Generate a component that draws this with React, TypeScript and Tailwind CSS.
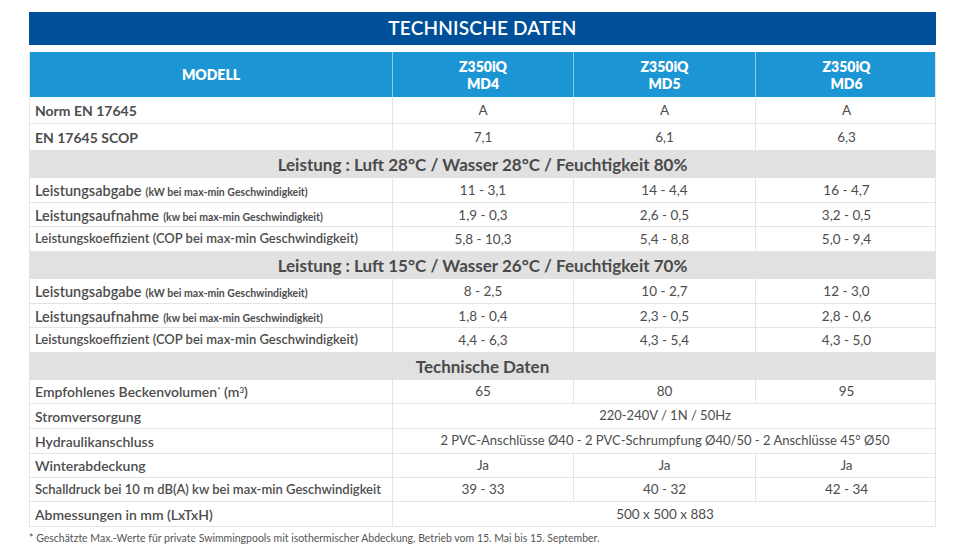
import React from "react";

const font = { fontFamily: "Lato, 'Open Sans', sans-serif" };

const cols = "grid grid-cols-[363px_181px_182px_181px]";

type Row = {
  label: React.ReactNode;
  values: string[];
  h: string;
};

function DataRow({ label, values, h }: Row) {
  return (
    <div className={`${cols} ${h} border-b border-[#e4e4e4] text-[#4d4d4d]`}>
      <div className="flex items-center pl-[5px] border-r border-[#e4e4e4] whitespace-nowrap">{label}</div>
      {values.length === 1 ? (
        <div className="col-span-3 flex items-center justify-center text-[13px]">{values[0]}</div>
      ) : (
        values.map((v, i) => (
          <div
            key={i}
            className={`flex items-center justify-center text-[13.5px] ${i < 2 ? "border-r border-[#e4e4e4]" : ""}`}
          >
            {v}
          </div>
        ))
      )}
    </div>
  );
}

function Section({ title }: { title: string }) {
  return (
    <div className="h-[27px] bg-[#e1e1e1] flex items-center justify-center text-[17px] font-bold text-[#4a4a4a]">
      {title}
    </div>
  );
}

const Abgabe = (
  <span>
    <span className="text-[14.5px] font-semibold">Leistungsabgabe</span>{" "}
    <span className="text-[10.5px] font-bold">(kW bei max-min Geschwindigkeit)</span>
  </span>
);
const Aufnahme = (
  <span>
    <span className="text-[14.5px] font-semibold">Leistungsaufnahme</span>{" "}
    <span className="text-[10.5px] font-bold">(kw bei max-min Geschwindigkeit)</span>
  </span>
);
const Koeff = <span className="text-[13px] font-semibold">Leistungskoeffizient (COP bei max-min Geschwindigkeit)</span>;

export default function App() {
  return (
    <div className="w-[961px] h-[554px] bg-white pt-[12px] pl-[29px]" style={font}>
      <div className="w-[907px]">
        <div className="h-[33px] bg-[#004f99] flex items-center justify-center text-white text-[19px] font-semibold tracking-[0.2px]">
          TECHNISCHE DATEN
        </div>
        <div className="mt-[7px] border-x border-b border-[#e4e4e4]">
          <div className={`${cols} h-[45px] bg-[#1b95d4] text-white font-extrabold text-[14px] leading-[17px]`}>
            <div className="flex items-center justify-center border-r border-[#8cc8ea]">MODELL</div>
            <div className="flex flex-col items-center justify-center border-r border-[#8cc8ea]">
              <span>Z350iQ</span>
              <span>MD4</span>
            </div>
            <div className="flex flex-col items-center justify-center border-r border-[#8cc8ea]">
              <span>Z350iQ</span>
              <span>MD5</span>
            </div>
            <div className="flex flex-col items-center justify-center">
              <span>Z350iQ</span>
              <span>MD6</span>
            </div>
          </div>
          <DataRow h="h-[27px]" label={<span className="text-[14px] font-bold">Norm EN 17645</span>} values={["A", "A", "A"]} />
          <DataRow h="h-[27px]" label={<span className="text-[14px] font-bold">EN 17645 SCOP</span>} values={["7,1", "6,1", "6,3"]} />
          <Section title="Leistung : Luft 28°C / Wasser 28°C / Feuchtigkeit 80%" />
          <DataRow h="h-[25px]" label={Abgabe} values={["11 - 3,1", "14 - 4,4", "16 - 4,7"]} />
          <DataRow h="h-[24px]" label={Aufnahme} values={["1,9 - 0,3", "2,6 - 0,5", "3,2 - 0,5"]} />
          <DataRow h="h-[25px]" label={Koeff} values={["5,8 - 10,3", "5,4 - 8,8", "5,0 - 9,4"]} />
          <Section title="Leistung : Luft 15°C / Wasser 26°C / Feuchtigkeit 70%" />
          <DataRow h="h-[25px]" label={Abgabe} values={["8 - 2,5", "10 - 2,7", "12 - 3,0"]} />
          <DataRow h="h-[24px]" label={Aufnahme} values={["1,8 - 0,4", "2,3 - 0,5", "2,8 - 0,6"]} />
          <DataRow h="h-[25px]" label={Koeff} values={["4,4 - 6,3", "4,3 - 5,4", "4,3 - 5,0"]} />
          <Section title="Technische Daten" />
          <DataRow
            h="h-[24px]"
            label={
              <span className="text-[14px] font-semibold">
                Empfohlenes Beckenvolumen<sup className="text-[8px]">*</sup> (m<sup className="text-[8px]">3</sup>)
              </span>
            }
            values={["65", "80", "95"]}
          />
          <DataRow h="h-[25px]" label={<span className="text-[14px] font-semibold">Stromversorgung</span>} values={["220-240V / 1N / 50Hz"]} />
          <DataRow
            h="h-[25px]"
            label={<span className="text-[14px] font-semibold">Hydraulikanschluss</span>}
            values={["2 PVC-Anschlüsse Ø40 - 2 PVC-Schrumpfung Ø40/50 - 2 Anschlüsse 45° Ø50"]}
          />
          <DataRow h="h-[24px]" label={<span className="text-[14px] font-semibold">Winterabdeckung</span>} values={["Ja", "Ja", "Ja"]} />
          <DataRow
            h="h-[24px]"
            label={<span className="text-[13px] font-semibold">Schalldruck bei 10 m dB(A) kw bei max-min Geschwindigkeit</span>}
            values={["39 - 33", "40 - 32", "42 - 34"]}
          />
          <div className={`${cols} h-[24px] text-[#4d4d4d]`}>
            <div className="flex items-center pl-[5px] border-r border-[#e4e4e4] text-[14px] font-semibold">Abmessungen in mm (LxTxH)</div>
            <div className="col-span-3 flex items-center justify-center text-[13.5px]">500 x 500 x 883</div>
          </div>
        </div>
        <p className="mt-[4px] text-[10.5px] text-[#555]">
          * Geschätzte Max.-Werte für private Swimmingpools mit isothermischer Abdeckung, Betrieb vom 15. Mai bis 15. September.
        </p>
      </div>
    </div>
  );
}
